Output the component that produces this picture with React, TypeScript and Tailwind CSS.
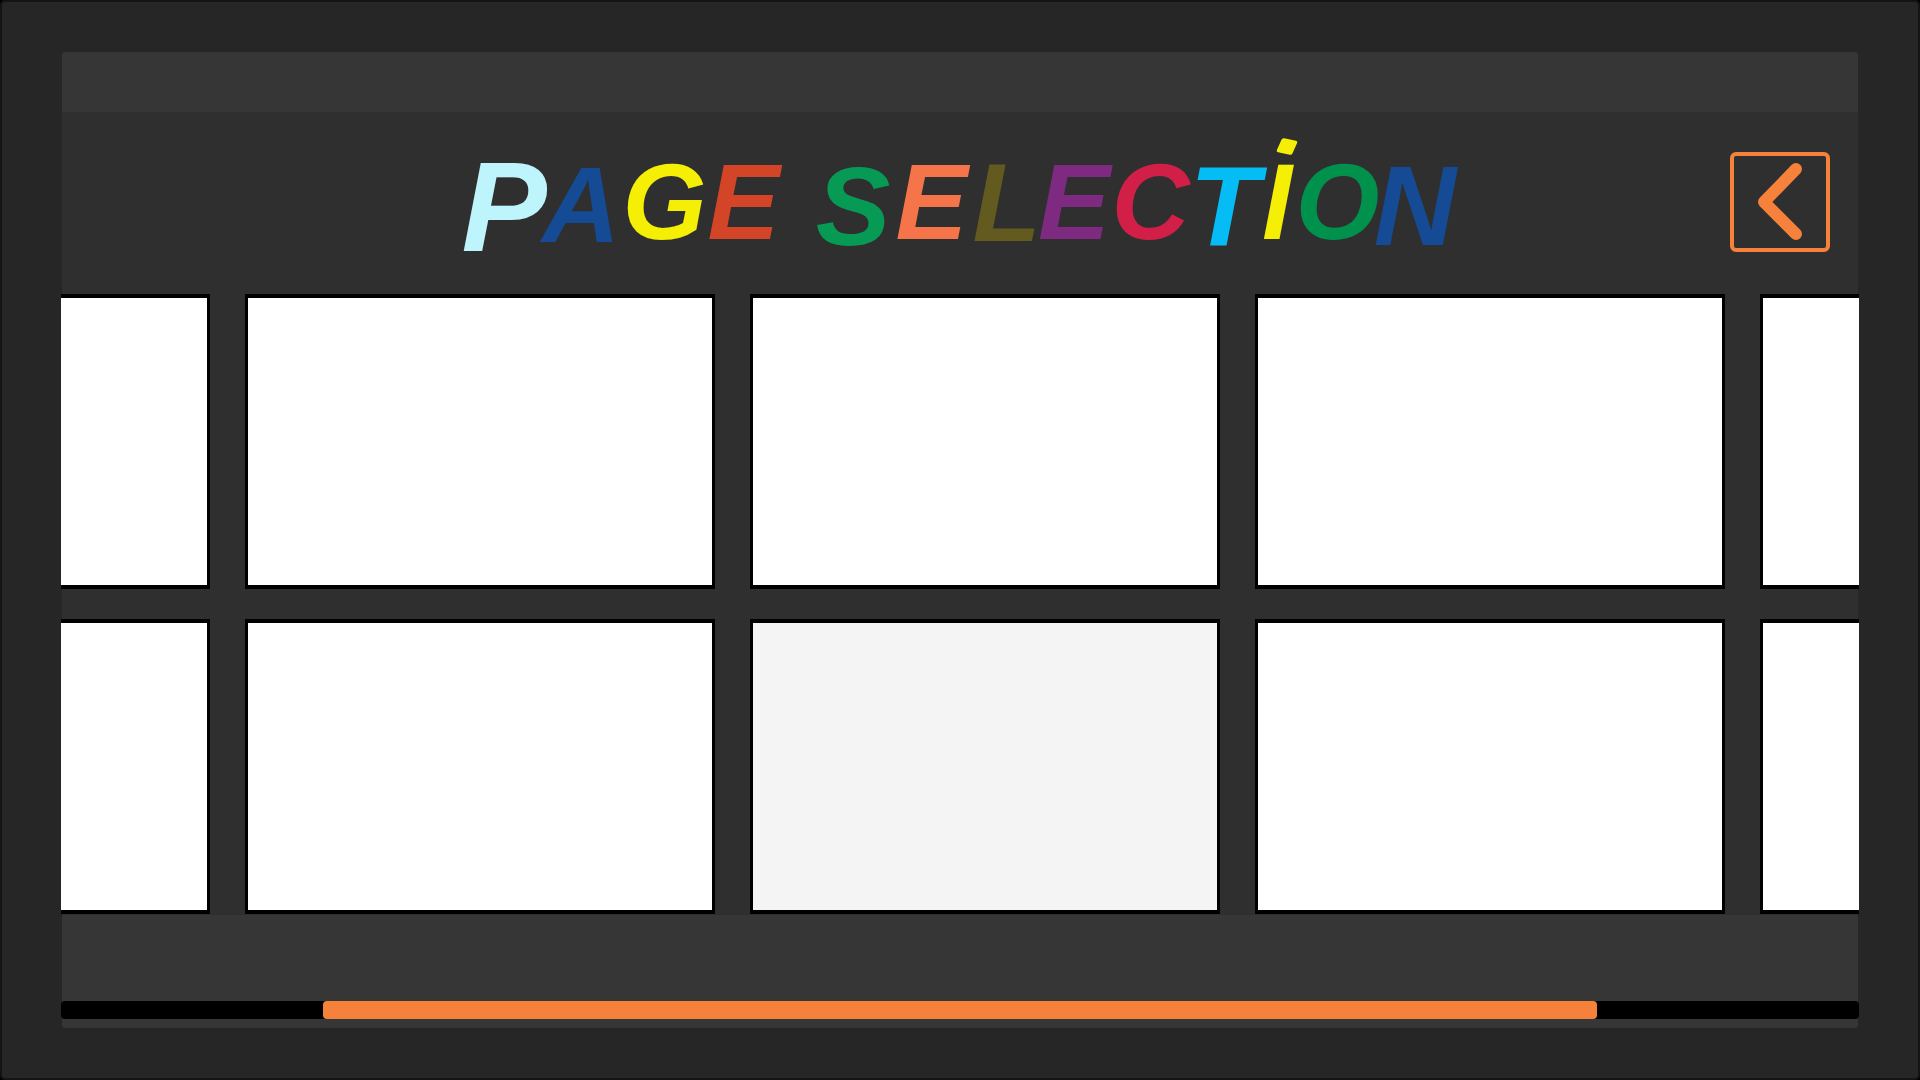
const letters = [
  { c: "P", cls: "w-[78px] translate-y-[5px] text-[#BEF4FB] text-[128px]" },
  { c: "A", cls: "w-[83px] translate-y-[3px] text-[#154A94] text-[108px]" },
  { c: "G", cls: "w-[81px] text-[#F5EE05] text-[108px]" },
  { c: "E", cls: "w-[80px] text-[#D44427] text-[108px]" },
  { c: " ", cls: "w-[32px] text-[#D44427] text-[106px]" },
  { c: "S", cls: "w-[75px] translate-y-[5px] text-[#069A55] text-[112px]" },
  { c: "E", cls: "w-[82px] text-[#F5744A] text-[108px]" },
  { c: "L", cls: "w-[64px] translate-y-[1px] text-[#635A20] text-[112px]" },
  { c: "E", cls: "w-[75px] text-[#7D2A80] text-[108px]" },
  { c: "C", cls: "w-[78px] text-[#D11F47] text-[108px]" },
  { c: "T", cls: "w-[69px] translate-y-[4px] text-[#05BCF5] text-[114px]" },
  { c: "I", cls: "w-[37px] text-[#F5EE05] text-[108px]" },
  { c: "O", cls: "w-[76px] text-[#00914C] text-[108px]" },
  { c: "N", cls: "w-[87px] translate-y-[4px] text-[#154A94] text-[114px]" },
];

function Card({ muted = false }: { muted?: boolean }) {
  return (
    <div
      className={`h-[295px] border-x-[3px] border-y-4 border-black ${
        muted ? "bg-[#F4F4F4]" : "bg-white"
      }`}
    />
  );
}

export default function App() {
  return (
    <div className="h-[1080px] w-[1920px] overflow-hidden bg-black">
      <div className="box-border h-[1080px] w-[1920px] overflow-hidden rounded-[5px] border-2 border-[#141414] bg-[#262626] pl-[60px] pt-[50px]">
        <div className="flex h-[976px] w-[1796px] flex-col rounded-[3px] bg-[#363636]">
          <div className="h-[60px] shrink-0" />
          <div className="h-[803px] shrink-0 bg-[#2F2F2F]">
            <div className="grid h-[182px] grid-cols-[1fr_auto_1fr] items-center">
              <div />
              <h1
                className="flex h-[182px] items-end whitespace-pre pb-[54px] pt-0 text-center font-bold italic leading-none"
                style={{ fontFamily: '"Liberation Sans", sans-serif' }}
              >
                {letters.map((l, i) => (
                  <span key={i} className={`relative block leading-[76px] ${l.cls}`}>
                    {l.c}
                    {l.c === "I" && i === 11 ? (
                      <span className="absolute left-[20px] top-[-25px] h-[15px] w-[16px] -skew-x-12 rotate-12 rounded-[2px] bg-[#F5EE05]" />
                    ) : null}
                  </span>
                ))}
              </h1>
              <div className="flex justify-end pr-[28px]">
                <button className="mb-[2px] flex h-[100px] w-[100px] items-center justify-center rounded-[6px] border-4 border-[#F5813A]">
                  <svg width="92" height="92" viewBox="0 0 92 92" fill="none">
                    <path
                      d="M62 13 L30 46 L62 78"
                      stroke="#F5813A"
                      strokeWidth="12"
                      strokeLinecap="round"
                      strokeLinejoin="round"
                    />
                  </svg>
                </button>
              </div>
            </div>
            <div className="-mx-px h-[620px] overflow-hidden">
              <div className="ml-[-321px] grid w-[2490px] grid-cols-[repeat(5,470px)] gap-x-[35px] gap-y-[30px]">
                {Array.from({ length: 10 }).map((_, i) => (
                  <Card key={i} muted={i === 7} />
                ))}
              </div>
            </div>
          </div>
          <div className="-mx-px mt-[86px] h-[18px] shrink-0 rounded-[4px] bg-black">
            <div className="ml-[262px] h-[18px] w-[1274px] rounded-[4px] bg-[#F5813A]" />
          </div>
        </div>
      </div>
    </div>
  );
}
